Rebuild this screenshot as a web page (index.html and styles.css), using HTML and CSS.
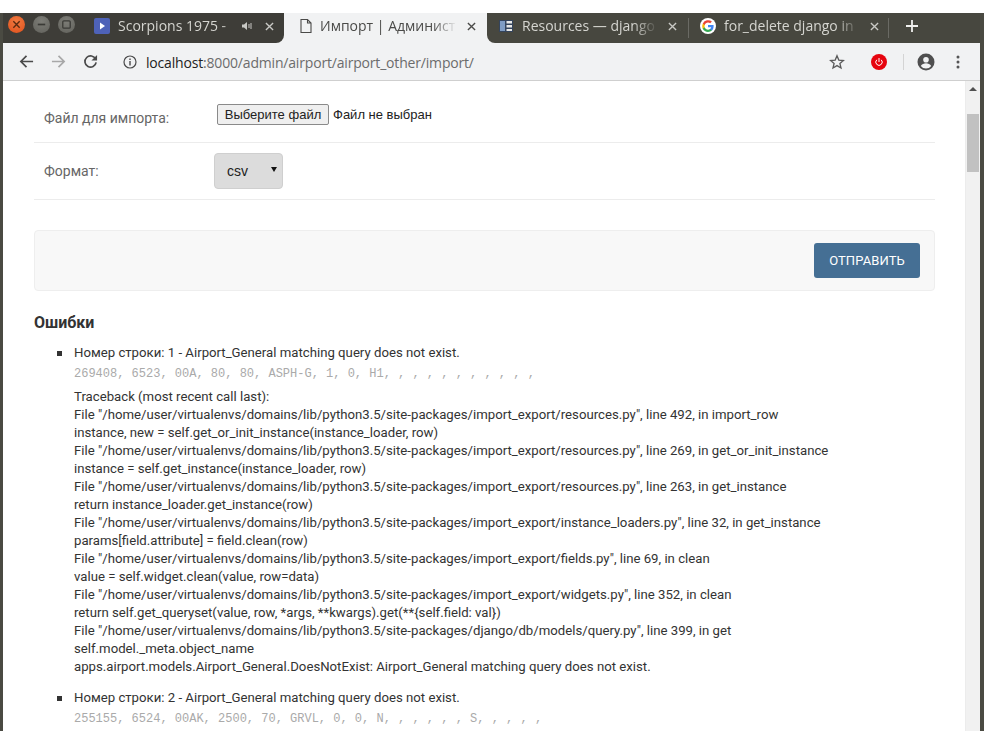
FILE: index.html
```html
<!DOCTYPE html>
<html lang="ru">
<head>
<meta charset="utf-8">
<title>Импорт | Администрирование</title>
<link rel="stylesheet" href="styles.css">
</head>
<body>
<div class="window">
  <div class="tabbar">
    <div class="controls">
      <span class="wbtn close"><svg viewBox="0 0 16 16"><path d="M5 5l6 6M11 5l-6 6" stroke="#5a2a10" stroke-width="1.3" fill="none"/></svg></span>
      <span class="wbtn"><svg viewBox="0 0 16 16"><path d="M4.5 8h7" stroke="#3a3a36" stroke-width="1.6" fill="none"/></svg></span>
      <span class="wbtn"><svg viewBox="0 0 16 16"><rect x="4.5" y="4.5" width="7" height="7" rx="1" stroke="#3a3a36" stroke-width="1.2" fill="none"/></svg></span>
    </div>
    <div class="tab tab1">
      <svg class="fav" viewBox="0 0 16 16"><rect width="16" height="16" rx="2" fill="#4e62b8"/><path d="M6 4.5l5 3.5-5 3.5z" fill="#fff"/></svg>
      <span class="tab-title">Scorpions 1975 -</span>
      <svg class="audio" viewBox="0 0 12 12"><path d="M1 4.5h2l3-2.5v8l-3-2.500H1z" fill="#c8c8c4"/><path d="M8 4v4M10 3v6" stroke="#c8c8c4" stroke-width="1" fill="none"/></svg>
      <svg class="x" viewBox="0 0 10 10"><path d="M1 1l8 8M9 1l-8 8" stroke="#c9c9c5" stroke-width="1.500" fill="none"/></svg>
    </div>
    <div class="tab active">
      <svg class="fav" viewBox="0 0 16 16"><path d="M3 1.500h6.500l3.500 3.500v9.500H3zM9.500 1.500V5H13" fill="none" stroke="#4a4a48" stroke-width="1.100"/></svg>
      <span class="tab-title">Импорт | Админист</span>
      <svg class="x" viewBox="0 0 10 10"><path d="M1 1l8 8M9 1l-8 8" stroke="#4a4a48" stroke-width="1.500" fill="none"/></svg>
    </div>
    <div class="tab tab3">
      <svg class="fav" viewBox="0 0 16 16"><rect x="1" y="2" width="14" height="12" fill="#34445c"/><rect x="2" y="3" width="5" height="10" fill="#7f9cc4"/><rect x="8.500" y="3" width="5.500" height="2.500" fill="#e8e8e8"/><rect x="8.500" y="7" width="5.500" height="2.500" fill="#e8e8e8"/><rect x="8.500" y="11" width="5.500" height="2" fill="#e8e8e8"/></svg>
      <span class="tab-title">Resources — django</span>
      <svg class="x" viewBox="0 0 10 10"><path d="M1 1l8 8M9 1l-8 8" stroke="#c9c9c5" stroke-width="1.500" fill="none"/></svg>
    </div>
    <div class="tab tab4">
      <svg class="fav" viewBox="0 0 16 16"><circle cx="8" cy="8" r="8" fill="#fff"/><path d="M13.600 8.200c0-.4 0-.8-.1-1.200H8v2.300h3.200a2.700 2.700 0 0 1-1.200 1.800v1.500h1.900c1.100-1 1.700-2.500 1.700-4.400z" fill="#4285f4"/><path d="M8 14c1.600 0 3-.5 3.900-1.400L10 11.100c-.5.400-1.200.6-2 .6-1.500 0-2.800-1-3.300-2.400H2.800v1.500A6 6 0 0 0 8 14z" fill="#34a853"/><path d="M4.700 9.300a3.600 3.600 0 0 1 0-2.400V5.400H2.800a6 6 0 0 0 0 5.400z" fill="#fbbc05"/><path d="M8 4.400c.9 0 1.600.3 2.200.9l1.700-1.700A6 6 0 0 0 2.800 5.400l1.900 1.500C5.200 5.400 6.500 4.400 8 4.400z" fill="#ea4335"/></svg>
      <span class="tab-title">for_delete django in</span>
      <svg class="x" viewBox="0 0 10 10"><path d="M1 1l8 8M9 1l-8 8" stroke="#c9c9c5" stroke-width="1.500" fill="none"/></svg>
    </div>
    <div class="tab-rest"><svg class="plus" viewBox="0 0 12 12"><path d="M6 0v12M0 6h12" stroke="#f0f0ee" stroke-width="1.800" fill="none"/></svg></div>
  </div>
  <div class="toolbar">
    <svg class="nav" viewBox="0 0 16 16"><path d="M15 8H2M8 2L2 8l6 6" fill="none" stroke="#4a4a4a" stroke-width="1.800"/></svg>
    <svg class="nav" viewBox="0 0 16 16"><path d="M1 8h13M8 2l6 6-6 6" fill="none" stroke="#a8a8a8" stroke-width="1.800"/></svg>
    <svg class="nav" viewBox="0 0 16 16"><path d="M13.500 5.500A6 6 0 1 0 14 9" fill="none" stroke="#4a4a4a" stroke-width="1.800"/><path d="M15 1v6H9z" fill="#4a4a4a"/></svg>
    <svg class="info" viewBox="0 0 14 14"><circle cx="7" cy="7" r="6" fill="none" stroke="#4a4a4a" stroke-width="1.200"/><path d="M7 6v4.500M7 3.500v1.400" stroke="#4a4a4a" stroke-width="1.400" fill="none"/></svg>
    <div class="url"><span class="host">localhost</span>:8000/admin/airport/airport_other/import/</div>
    <svg class="star" viewBox="0 0 16 16"><path d="M8 1.800l1.800 4.300 4.600.4-3.500 3 1.100 4.500L8 11.600 4 14l1.100-4.500-3.500-3 4.600-.4z" fill="none" stroke="#5a5a5a" stroke-width="1.300"/></svg>
    <svg class="power" viewBox="0 0 16 16"><circle cx="8" cy="8" r="8" fill="#e6040e"/><path d="M5.800 5.800a3.200 3.200 0 1 0 4.400 0" fill="none" stroke="#fff" stroke-width="1"/><path d="M8 4v4" stroke="#fff" stroke-width="1" fill="none"/></svg>
    <span class="tool-sep"></span>
    <svg class="account" viewBox="0 0 18 18"><circle cx="9" cy="9" r="8.500" fill="#4f4f4f"/><circle cx="9" cy="6.800" r="2.800" fill="#f1f2f3"/><path d="M3.800 13c1-2 3.200-2.800 5.200-2.800s4.200.8 5.200 2.800a6.600 6.600 0 0 1-10.400 0z" fill="#f1f2f3"/></svg>
    <svg class="menu" viewBox="0 0 4 14"><circle cx="2" cy="2" r="1.500" fill="#555"/><circle cx="2" cy="7" r="1.500" fill="#555"/><circle cx="2" cy="12" r="1.500" fill="#555"/></svg>
  </div>
  <div class="viewport">
    <main class="page">
      <div class="row row-file">
        <label class="label">Файл для импорта:</label>
        <div class="file"><span class="file-btn">Выберите файл</span><span class="file-name">Файл не выбран</span></div>
      </div>
      <div class="row row-format">
        <label class="label">Формат:</label>
        <div class="select"><span>csv</span><i class="caret"></i></div>
      </div>
      <div class="actions"><span class="submit">ОТПРАВИТЬ</span></div>
      <h2 class="errors-title">Ошибки</h2>
      <ul class="errors">
        <li>
          <h3 class="err-head">Номер строки: 1 - Airport_General matching query does not exist.</h3>
          <code class="err-data">269408, 6523, 00A, 80, 80, ASPH-G, 1, 0, H1, , , , , , , , , , , </code>
          <div class="trace">
            <div>Traceback (most recent call last):</div>
            <div>File "/home/user/virtualenvs/domains/lib/python3.5/site-packages/import_export/resources.py", line 492, in import_row</div>
            <div>instance, new = self.get_or_init_instance(instance_loader, row)</div>
            <div>File "/home/user/virtualenvs/domains/lib/python3.5/site-packages/import_export/resources.py", line 269, in get_or_init_instance</div>
            <div>instance = self.get_instance(instance_loader, row)</div>
            <div>File "/home/user/virtualenvs/domains/lib/python3.5/site-packages/import_export/resources.py", line 263, in get_instance</div>
            <div>return instance_loader.get_instance(row)</div>
            <div>File "/home/user/virtualenvs/domains/lib/python3.5/site-packages/import_export/instance_loaders.py", line 32, in get_instance</div>
            <div>params[field.attribute] = field.clean(row)</div>
            <div>File "/home/user/virtualenvs/domains/lib/python3.5/site-packages/import_export/fields.py", line 69, in clean</div>
            <div>value = self.widget.clean(value, row=data)</div>
            <div>File "/home/user/virtualenvs/domains/lib/python3.5/site-packages/import_export/widgets.py", line 352, in clean</div>
            <div>return self.get_queryset(value, row, *args, **kwargs).get(**{self.field: val})</div>
            <div>File "/home/user/virtualenvs/domains/lib/python3.5/site-packages/django/db/models/query.py", line 399, in get</div>
            <div>self.model._meta.object_name</div>
            <div>apps.airport.models.Airport_General.DoesNotExist: Airport_General matching query does not exist.</div>
          </div>
        </li>
        <li>
          <h3 class="err-head">Номер строки: 2 - Airport_General matching query does not exist.</h3>
          <code class="err-data">255155, 6524, 00AK, 2500, 70, GRVL, 0, 0, N, , , , , , S, , , , , </code>
        </li>
      </ul>
    </main>
    <div class="scrollbar">
      <i class="arrow"></i>
      <span class="thumb"></span>
    </div>
  </div>
</div>
</body>
</html>
```
FILE: styles.css
```css
* { box-sizing: border-box; }
html, body { margin: 0; height: 100%; background: #fff; overflow: hidden; }
body { font-family: Roboto, "Liberation Sans", sans-serif; font-size: 13.2px; color: #333; }

.window {
  margin-top: 13px;
  height: 718px;
  display: flex;
  flex-direction: column;
  border-left: 3px solid #4a4a42;
  border-right: 4px solid #4a4a42;
  overflow: hidden;
}

/* tab strip */
.tabbar {
  height: 30px;
  flex: none;
  display: flex;
  background: #f1f2f3;
  color: #d5d5d0;
  font-family: "Open Sans", Roboto, sans-serif;
  font-size: 14px;
}
.controls { width: 88px; display: flex; gap: 8px; padding-left: 5px; padding-top: 3px; flex: none; background: #3e3d38; }
.wbtn { width: 17px; height: 17px; border-radius: 50%; background: radial-gradient(circle at 50% 30%, #7d7d77, #61615b); display: block; }
.wbtn.close { background: radial-gradient(circle at 50% 30%, #f07a40, #e0501c); }
.wbtn svg { display: block; width: 100%; height: 100%; }
.tab { height: 30px; display: flex; align-items: center; flex: none; padding-bottom: 4px; }
.tab-title { display: block; overflow: hidden; white-space: nowrap; margin-bottom: 2px; -webkit-mask-image: linear-gradient(to right, #000 82%, transparent); mask-image: linear-gradient(to right, #000 82%, transparent); }
.fav { width: 16px; height: 16px; flex: none; }
.x { width: 9px; height: 9px; flex: none; }
.tab1 { width: 193px; padding-left: 3px; background: #3e3d38; border-bottom-right-radius: 8px; }
.tab1 .tab-title { width: 125px; margin-left: 8px; }
.audio { width: 12px; height: 12px; margin-left: -2px; flex: none; }
.tab1 .x { margin-left: 12px; }
.tab.active { width: 203px; color: #4a4a48; padding-left: 14px; }
.active .tab-title { width: 137px; margin-left: 6px; }
.active .x { margin-left: 10px; }
.tab3 { width: 202px; padding-left: 11px; background: linear-gradient(#6a6a64, #6a6a64) right center / 1px 20px no-repeat, #47473f; border-bottom-left-radius: 8px; }
.tab3 .tab-title { width: 136px; margin-left: 8px; }
.tab3 .x { margin-left: 10px; }
.tab4 { width: 200px; padding-left: 11px; background: linear-gradient(#6a6a64, #6a6a64) right center / 1px 20px no-repeat, #47473f; }
.tab4 .tab-title { width: 136px; margin-left: 8px; }
.tab4 .x { margin-left: 10px; }
.tab-rest { flex: 1; display: flex; align-items: center; padding: 0 0 4px 17px; background: #47473f; }
.plus { width: 12px; height: 12px; flex: none; }

/* toolbar */
.toolbar {
  height: 38px;
  flex: none;
  display: flex;
  align-items: center;
  background: #f1f2f3;
  border-bottom: 1px solid #cfcfcf;
  padding-left: 16px;
  color: #6c6c6c;
  font-family: "Open Sans", Roboto, sans-serif;
  font-size: 14px;
}
.nav { width: 15px; height: 15px; flex: none; margin-right: 17px; }
.info { width: 14px; height: 14px; flex: none; margin-left: 8px; }
.url { margin-left: 9px; padding-top: 1px; white-space: nowrap; width: 686px; flex: none; letter-spacing: -0.18px; }
.host { color: #222; }
.star { width: 16px; height: 16px; margin-left: -3px; flex: none; }
.power { width: 16px; height: 16px; margin-left: 26px; flex: none; }
.tool-sep { width: 1px; height: 16px; background: #d4d4d4; margin-left: 16px; flex: none; }
.account { width: 18px; height: 18px; margin-left: 13px; flex: none; }
.menu { width: 4px; height: 14px; margin-left: 21px; flex: none; }

/* page */
.viewport { flex: 1; display: flex; min-height: 0; background: #fff; }
.page { flex: 1; min-width: 0; padding: 0 30px 0 31px; overflow: hidden; }
.row { display: flex; border-bottom: 1px solid #ececec; }
.row-file { height: 62px; padding: 0 0 0 10px; align-items: flex-start; }
.row-format { height: 57px; padding: 0 0 0 10px; align-items: center; }
.label { width: 170px; flex: none; color: #666; font-size: 14px; }
.row-file .label { padding-top: 29px; }
.file { display: flex; align-items: center; margin-top: 23px; margin-left: 3px; font-family: "Liberation Sans", Arial, sans-serif; font-size: 13px; color: #222; }
.file-btn { height: 21px; width: 112px; display: flex; align-items: center; justify-content: center; background: #efefef; border: 1px solid #8a8a8a; border-radius: 2px; }
.file-name { margin-left: 4px; }
.select { width: 69px; height: 36px; background: #dcdcdc; border: 1px solid #cfcfcf; border-radius: 4px; display: flex; align-items: center; padding-left: 12px; justify-content: space-between; font-family: "Liberation Sans", Arial, sans-serif; font-size: 14px; color: #222; }
.caret { width: 0; height: 0; border-left: 3px solid transparent; border-right: 3px solid transparent; border-top: 5px solid #111; margin: 0 5px 3px 0; }

.actions { margin-top: 30px; height: 61px; background: #f8f8f8; border: 1px solid #eeeeee; border-radius: 4px; display: flex; align-items: center; justify-content: flex-end; padding-right: 14px; }
.submit { width: 106px; height: 35px; background: #456f94; border-radius: 3px; color: #fff; font-size: 13px; display: flex; align-items: center; justify-content: center; letter-spacing: .1px; }

.errors-title { margin: 22px 0 0; font-size: 16px; line-height: 20px; font-weight: 700; color: #333; }
.errors { list-style: none; margin: 11px 0 0; padding: 0 0 0 23px; }
.errors li { margin-bottom: 13px; padding-left: 17px; background: linear-gradient(#333, #333) 0 7px / 5px 5px no-repeat; }
.err-head { margin: 0; font-size: 13.2px; line-height: 18px; font-weight: 400; color: #333; }
.err-data { display: block; margin-top: 3px; font-family: "Liberation Mono", monospace; font-size: 12px; line-height: 18px; color: #aaa; white-space: pre; }
.trace { margin-top: 5px; line-height: 18px; color: #333; white-space: nowrap; }

.scrollbar { width: 15px; flex: none; background: #f1f1f1; border-left: 1px solid #ececec; display: flex; flex-direction: column; align-items: center; }
.arrow { width: 0; height: 0; border-left: 4px solid transparent; border-right: 4px solid transparent; border-bottom: 4px solid #505050; margin-top: 6px; }
.thumb { width: 12px; height: 58px; background: #c1c1c1; margin-top: 23px; }
```
